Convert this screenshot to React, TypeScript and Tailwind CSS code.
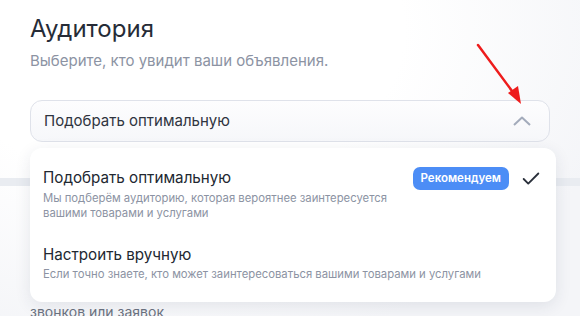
import { Check } from "lucide-react";

const font = { fontFamily: "Inter, 'Noto Sans', sans-serif" };

export default function App() {
  return (
    <div
      className="relative h-[316px] w-[580px] overflow-hidden bg-[radial-gradient(ellipse_at_30%_10%,#ffffff_40%,#f4f5f8_80%)]"
      style={font}
    >
      {/* page under the menu */}
      <div className="px-[30px] pt-[13px]">
        <h1 className="text-[24px] font-normal leading-[32px] text-[#262c37]">Аудитория</h1>
        <p className="mt-[6px] text-[15px] leading-[20px] text-[#8c93a3]">
          Выберите, кто увидит ваши объявления.
        </p>

        <div className="mt-[29px] flex h-[42px] items-center justify-between rounded-[12px] border border-[#dfe2ea] bg-gradient-to-b from-[#fdfdfe] to-[#f6f7fa] pl-[13px] pr-[17px]">
          <span className="text-[15px] text-[#2f3440]">Подобрать оптимальную</span>
          <svg width="18" height="10" viewBox="0 0 18 10" className="mr-[1px]">
            <polyline points="1,9 9,1.5 17,9" fill="none" stroke="#a3abbb" strokeWidth="2" strokeLinejoin="round" />
          </svg>
        </div>
      </div>

      <div className="mt-[36px] h-[8px] bg-[#e9ecf1]" />
      <div className="px-[30px] pt-[115px] text-[14px] text-[#6b7280]">звонков или заявок</div>

      {/* dropdown */}
      <div className="absolute left-[30px] top-[148px] w-[526px] rounded-[12px] bg-white pb-[20px] pl-[13px] pr-[14px] pt-[19px] shadow-[0_4px_16px_rgba(40,50,80,0.10)]">
        <div className="flex items-start justify-between">
          <div>
            <div className="text-[15.2px] leading-[22px] text-[#222831]">Подобрать оптимальную</div>
            <div className="mt-[2px] w-[360px] text-[11.3px] leading-[15px] text-[#8c93a3]">
              Мы подберём аудиторию, которая вероятнее заинтересуется вашими товарами и услугами
            </div>
          </div>
          <div className="flex items-center gap-[11px]">
            <span className="rounded-[7px] bg-[#4c8df6] px-[8px] py-[3px] text-[11.5px] font-semibold leading-[17px] text-white">
              Рекомендуем
            </span>
            <Check className="h-[22px] w-[22px] text-[#2a303b]" strokeWidth={2} />
          </div>
        </div>

        <div className="mt-[23px]">
          <div className="text-[15.2px] leading-[22px] text-[#222831]">Настроить вручную</div>
          <div className="mt-[1px] text-[11.3px] leading-[15px] text-[#8c93a3]">
            Если точно знаете, кто может заинтересоваться вашими товарами и услугами
          </div>
        </div>
      </div>

      {/* red annotation arrow */}
      <svg className="absolute left-0 top-0" width="580" height="316" viewBox="0 0 580 316">
        <line x1="478" y1="45" x2="515" y2="95" stroke="#ee1c1c" strokeWidth="2.5" strokeLinecap="round" />
        <polygon points="521,104 508,93 518,86" fill="#ee1c1c" />
      </svg>
    </div>
  );
}
